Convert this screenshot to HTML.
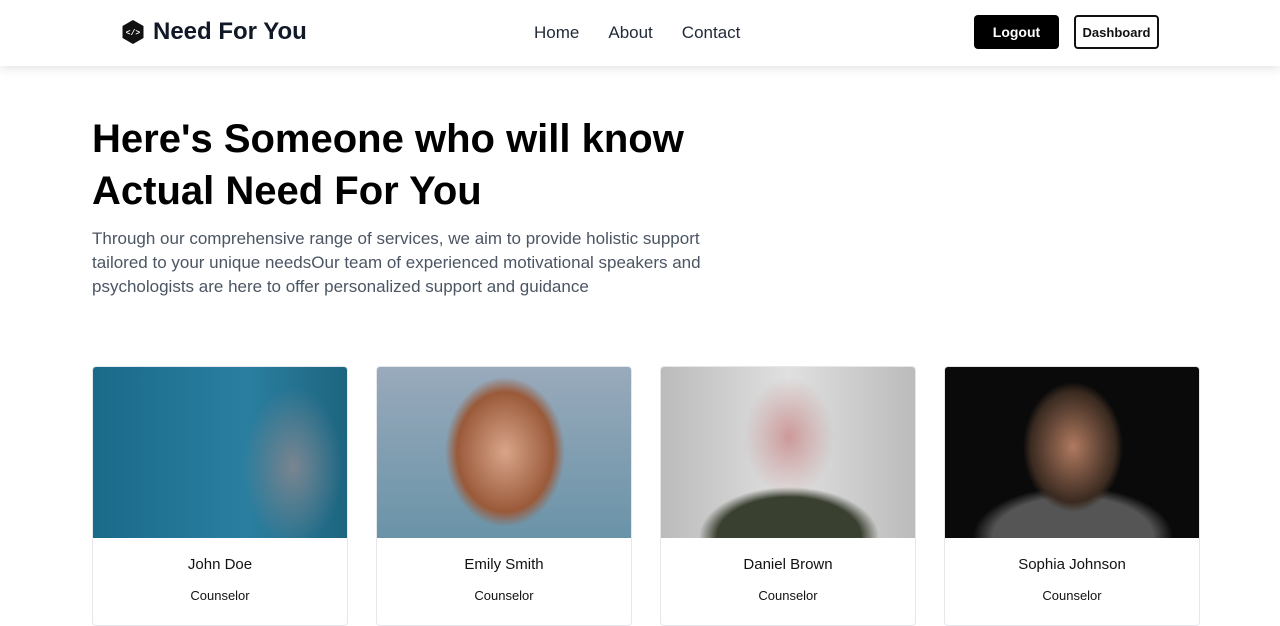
<!DOCTYPE html>
<html><head><meta charset="utf-8"><style>
*{margin:0;padding:0;box-sizing:border-box}
body{width:1280px;height:618px;overflow:hidden;background:#fff;font-family:"Liberation Sans",sans-serif;position:relative}
.nav{position:absolute;left:0;top:0;width:1280px;height:66px;background:#fff;box-shadow:0 2px 10px rgba(0,0,0,.12);z-index:2}
.logo{position:absolute;left:121px;top:18px;display:flex;align-items:center;gap:8px;font-weight:bold;font-size:24px;color:#111827}
.links{position:absolute;top:23px;left:534px;font-size:17px;color:#1f2937}
.links span{margin-right:29px}
.btn{position:absolute;top:15px;height:34px;border-radius:4px;font-size:14px;font-weight:bold;display:flex;align-items:center;justify-content:center}
h1{position:absolute;left:92px;top:113px;font-size:40px;line-height:52px;color:#000;width:700px}
p.d{position:absolute;left:92px;top:227px;font-size:17px;line-height:24px;color:#4b5563;width:630px}
.card{position:absolute;top:366px;width:256px;height:260px;border:1px solid #e5e7eb;border-radius:4px;overflow:hidden;background:#fff}
.img{height:171px}
.n{text-align:center;font-size:15px;color:#111;margin-top:18px}
.r{text-align:center;font-size:13px;color:#111;margin-top:15px}
</style></head><body>
<div class="nav">
<div class="logo"><svg width="24" height="26" viewBox="0 0 24 26"><path d="M12 1 L22.5 7 V19 L12 25 L1.5 19 V7Z" fill="#111"/><text x="12" y="16" font-size="8" fill="#fff" text-anchor="middle" font-family="Liberation Mono">&lt;/&gt;</text></svg>Need For You</div>
<div class="links"><span>Home</span><span>About</span><span>Contact</span></div>
<div class="btn" style="left:974px;width:85px;background:#000;color:#fff">Logout</div>
<div class="btn" style="left:1074px;width:85px;border:2px solid #111;color:#111;font-size:13px">Dashboard</div>
</div>
<h1>Here's Someone who will know Actual Need For You</h1>
<p class="d">Through our comprehensive range of services, we aim to provide holistic support tailored to your unique needsOur team of experienced motivational speakers and psychologists are here to offer personalized support and guidance</p>
<div class="card" style="left:92px"><div class="img" style="background:radial-gradient(ellipse 50px 80px at 200px 100px,#7a8590,transparent),linear-gradient(90deg,#1a6a8a,#2a7fa0 60%,#1d6580)"></div><div class="n">John Doe</div><div class="r">Counselor</div></div>
<div class="card" style="left:376px"><div class="img" style="background:radial-gradient(ellipse 60px 75px at 128px 85px,#d9a58a,#9a5a3a 80%,transparent 100%),linear-gradient(#9ab,#6a93a8)"></div><div class="n">Emily Smith</div><div class="r">Counselor</div></div>
<div class="card" style="left:660px"><div class="img" style="background:radial-gradient(ellipse 45px 60px at 128px 70px,#c99,transparent),radial-gradient(ellipse 90px 50px at 128px 170px,#3a4030 80%,transparent),linear-gradient(90deg,#bbb,#e0e0e0,#bbb)"></div><div class="n">Daniel Brown</div><div class="r">Counselor</div></div>
<div class="card" style="left:944px"><div class="img" style="background:radial-gradient(ellipse 50px 65px at 128px 80px,#b07a60,#3a2a20 85%,transparent),radial-gradient(ellipse 100px 50px at 128px 170px,#555 80%,transparent),#0a0a0a"></div><div class="n">Sophia Johnson</div><div class="r">Counselor</div></div>
</body></html>
